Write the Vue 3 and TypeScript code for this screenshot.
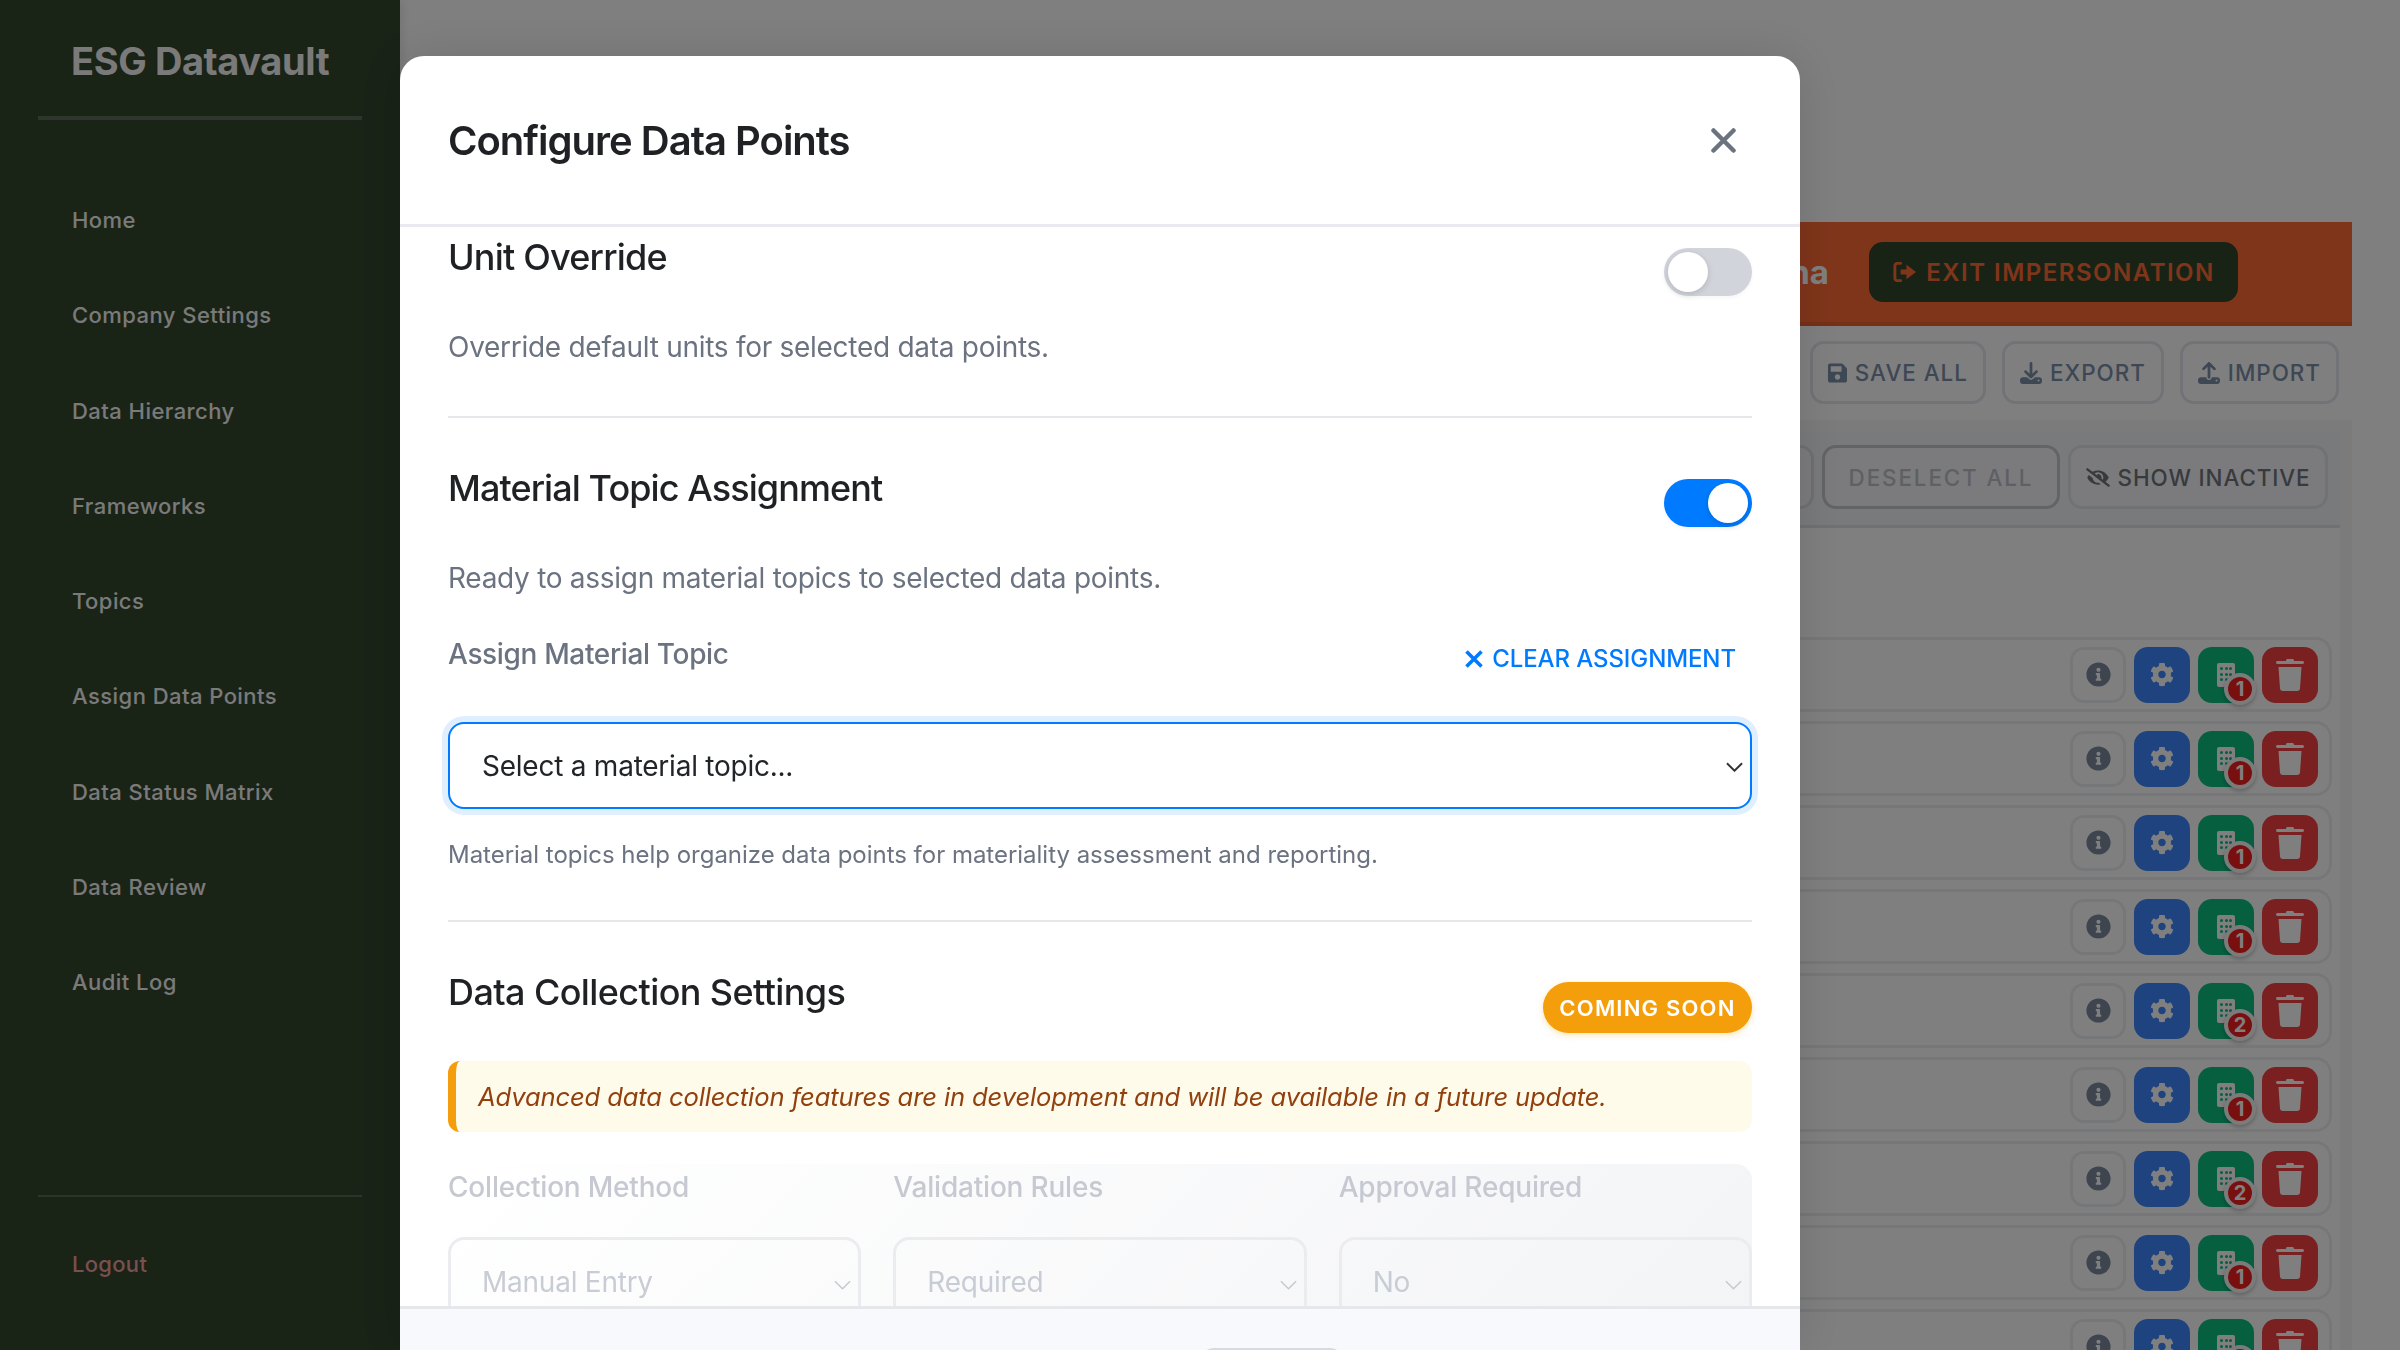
<script setup lang="ts">
const navItems: string[] = ['Home', 'Company Settings', 'Data Hierarchy', 'Frameworks', 'Topics', 'Assign Data Points', 'Data Status Matrix', 'Data Review', 'Audit Log']
const rows: number[] = [1, 1, 1, 1, 2, 1, 2, 1, 1]
const dots: number[] = [0, 1, 2, 3, 4, 5, 6, 7, 8]
</script>

<template>
  <div class="page">
    <aside class="sidebar">
      <div class="brand">ESG Datavault</div>
      <nav class="nav">
        <a v-for="item in navItems" :key="item" class="nav-item">{{ item }}</a>
      </nav>
      <div class="side-foot"><a class="logout">Logout</a></div>
    </aside>

    <main class="main">
      <div class="banner">
        <span class="banner-text">Impersonating Arizona</span>
        <button class="exit-btn">
          <svg class="ic-exit" viewBox="0 0 26 24"><path d="M9 3H5.500A2.500 2.500 0 0 0 3 5.500v13A2.500 2.500 0 0 0 5.500 21H9" fill="none" stroke="currentColor" stroke-width="3" stroke-linecap="round"/><path d="M9 9.500h6V4.500L25 12l-10 7.500v-5H9z" fill="currentColor"/></svg>
          EXIT IMPERSONATION
        </button>
      </div>
      <div class="actions">
        <button class="act-btn">
          <svg class="ic-save" viewBox="0 0 448 512"><path d="M433.941 129.941l-83.882-83.882A48 48 0 0 0 316.118 32H48C21.49 32 0 53.49 0 80v352c0 26.51 21.49 48 48 48h352c26.51 0 48-21.49 48-48V163.882a48 48 0 0 0-14.059-33.941zM224 416c-35.346 0-64-28.654-64-64 0-35.346 28.654-64 64-64s64 28.654 64 64c0 35.346-28.654 64-64 64zm96-304.52V212c0 6.627-5.373 12-12 12H76c-6.627 0-12-5.373-12-12V108c0-6.627 5.373-12 12-12h228.52c3.183 0 6.235 1.264 8.485 3.515l3.48 3.48A11.996 11.996 0 0 1 320 111.48z" fill="currentColor"/></svg>
          SAVE ALL
        </button>
        <button class="act-btn">
          <svg class="ic-act" viewBox="0 0 512 512"><path d="M288 32c0-17.700-14.300-32-32-32s-32 14.300-32 32V274.700l-73.400-73.400c-12.500-12.500-32.800-12.500-45.300 0s-12.500 32.800 0 45.300l128 128c12.500 12.500 32.800 12.500 45.300 0l128-128c12.500-12.500 12.500-32.800 0-45.300s-32.800-12.500-45.300 0L288 274.700V32zM64 352c-35.300 0-64 28.700-64 64v32c0 35.300 28.700 64 64 64H448c35.300 0 64-28.700 64-64V416c0-35.300-28.700-64-64-64H346.500l-45.300 45.300c-25 25-65.500 25-90.500 0L165.500 352H64zm368 56a24 24 0 1 1 0 48 24 24 0 1 1 0-48z" fill="currentColor"/></svg>
          EXPORT
        </button>
        <button class="act-btn">
          <svg class="ic-act" viewBox="0 0 512 512"><path d="M288 109.300V352c0 17.700-14.300 32-32 32s-32-14.300-32-32V109.300l-73.400 73.400c-12.500 12.500-32.800 12.500-45.300 0s-12.500-32.800 0-45.300l128-128c12.500-12.500 32.800-12.500 45.300 0l128 128c12.500 12.500 12.500 32.800 0 45.300s-32.800 12.500-45.300 0L288 109.300zM64 352H192c0 35.300 28.700 64 64 64s64-28.700 64-64H448c35.300 0 64 28.700 64 64v32c0 35.300-28.700 64-64 64H64c-35.300 0-64-28.700-64-64V416c0-35.300 28.700-64 64-64zM432 456a24 24 0 1 0 0-48 24 24 0 1 0 0 48z" fill="currentColor"/></svg>
          IMPORT
        </button>
      </div>
      <section class="panel">
        <div class="card">
          <div class="toolbar">
            <button class="tool-btn prev">SELECT ALL</button>
            <button class="tool-btn deselect">DESELECT ALL</button>
            <button class="tool-btn inactive">
              <svg class="ic-eye" viewBox="0 0 640 512"><path d="M320 400c-75.850 0-137.250-58.710-142.900-133.110L72.200 185.820c-13.790 17.300-26.480 35.590-36.720 55.590a32.350 32.350 0 0 0 0 29.190C89.710 376.410 197.070 448 320 448c26.910 0 52.870-4 77.890-10.460L346 397.390a144.130 144.130 0 0 1-26 2.610zm313.820 58.100l-110.550-85.440a331.250 331.250 0 0 0 81.250-102.070 32.350 32.350 0 0 0 0-29.190C550.290 135.590 442.930 64 320 64a308.150 308.150 0 0 0-147.320 37.700L45.460 3.370A16 16 0 0 0 23 6.180L3.370 31.450A16 16 0 0 0 6.180 53.900l588.360 454.730a16 16 0 0 0 22.460-2.810l19.640-25.270a16 16 0 0 0-2.820-22.450zm-183.720-142l-39.300-30.380A94.750 94.750 0 0 0 416 256a94.760 94.760 0 0 0-121.310-92.210A47.650 47.650 0 0 1 304 192a46.640 46.640 0 0 1-1.540 10l-73.610-56.890A142.310 142.310 0 0 1 320 112a143.920 143.920 0 0 1 144 144c0 21.630-5.290 41.790-13.900 60.110z" fill="currentColor"/></svg>
              SHOW INACTIVE
            </button>
          </div>
          <div class="rows">
            <div v-for="(count, i) in rows" :key="i" class="row">
              <button class="sq info">
                <svg class="ic-info" viewBox="0 0 512 512"><path d="M256 8C119.043 8 8 119.083 8 256c0 136.997 111.043 248 248 248s248-111.003 248-248C504 119.083 392.957 8 256 8zm0 110c23.196 0 42 18.804 42 42s-18.804 42-42 42-42-18.804-42-42 18.804-42 42-42zm56 254c0 6.627-5.373 12-12 12h-88c-6.627 0-12-5.373-12-12v-24c0-6.627 5.373-12 12-12h12v-64h-12c-6.627 0-12-5.373-12-12v-24c0-6.627 5.373-12 12-12h64c6.627 0 12 5.373 12 12v100h12c6.627 0 12 5.373 12 12v24z" fill="currentColor"/></svg>
              </button>
              <button class="sq gear">
                <svg class="ic-gear" viewBox="0 0 512 512"><path d="M487.400 315.700l-42.600-24.600c4.300-23.200 4.300-47 0-70.200l42.600-24.600c4.900-2.800 7.100-8.600 5.500-14-11.100-35.600-30-67.800-54.700-94.600-3.800-4.100-10-5.100-14.800-2.300L380.800 110c-17.900-15.400-38.500-27.300-60.800-35.100V25.800c0-5.600-3.900-10.500-9.400-11.700-36.700-8.200-74.300-7.800-109.200 0-5.500 1.200-9.400 6.100-9.400 11.700V75c-22.200 7.900-42.800 19.800-60.800 35.100L88.700 85.500c-4.900-2.800-11-1.900-14.800 2.300-24.700 26.700-43.600 58.900-54.700 94.600-1.700 5.400.6 11.200 5.500 14L67.300 221c-4.300 23.200-4.300 47 0 70.200l-42.600 24.600c-4.900 2.800-7.100 8.600-5.500 14 11.100 35.600 30 67.800 54.700 94.600 3.800 4.100 10 5.100 14.800 2.300l42.600-24.600c17.900 15.400 38.500 27.300 60.800 35.100v49.200c0 5.600 3.900 10.500 9.400 11.700 36.700 8.200 74.300 7.800 109.200 0 5.500-1.200 9.400-6.100 9.400-11.700v-49.200c22.200-7.900 42.800-19.800 60.800-35.100l42.600 24.600c4.900 2.800 11 1.900 14.800-2.300 24.700-26.700 43.600-58.900 54.700-94.600 1.500-5.500-.7-11.300-5.600-14.100zM256 336c-44.100 0-80-35.900-80-80s35.900-80 80-80 80 35.900 80 80-35.900 80-80 80z" fill="currentColor"/></svg>
              </button>
              <button class="sq build">
                <span class="building"><i v-for="d in dots" :key="d" class="dot"></i></span>
                <span class="badge">{{ count }}</span>
              </button>
              <button class="sq trash">
                <svg class="ic-trash" viewBox="0 0 28 32"><path d="M10 1.500C10 .7 10.700 0 11.500 0h5c.8 0 1.500.7 1.500 1.500V2h8.500c.8 0 1.500.7 1.500 1.500S27.300 5 26.500 5h-25C.7 5 0 4.300 0 3.500S.7 2 1.500 2H10zM2.500 8h23l-1.500 21.500c-.1 1.400-1.300 2.500-2.700 2.500H6.700c-1.400 0-2.600-1.100-2.700-2.500z" fill="currentColor"/></svg>
              </button>
            </div>
          </div>
        </div>
      </section>
    </main>

    <div class="overlay"></div>

    <div class="modal">
      <header class="modal-head">
        <h2 class="modal-title">Configure Data Points</h2>
        <button class="close-btn" aria-label="Close">
          <svg viewBox="0 0 25 25"><path d="M2.500 2.500l20 20M22.500 2.500l-20 20" stroke="currentColor" stroke-width="4.500" stroke-linecap="round" fill="none"/></svg>
        </button>
      </header>
      <div class="modal-body">
        <section class="sec">
          <div class="sec-head">
            <h3 class="sec-title">Unit Override</h3>
            <span class="toggle"><span class="knob"></span></span>
          </div>
          <p class="desc">Override default units for selected data points.</p>
        </section>

        <section class="sec second">
          <div class="sec-head">
            <h3 class="sec-title material">Material Topic Assignment</h3>
            <span class="toggle on"><span class="knob"></span></span>
          </div>
          <p class="desc">Ready to assign material topics to selected data points.</p>
          <div class="assign-row">
            <label class="assign-label">Assign Material Topic</label>
            <button class="clear-btn">
              <svg viewBox="0 0 18 18"><path d="M1.500 1.500l15 15M16.500 1.500l-15 15" stroke="currentColor" stroke-width="3.600" fill="none"/></svg>
              CLEAR ASSIGNMENT
            </button>
          </div>
          <div class="select focus">
            <span>Select a material topic...</span>
            <svg class="chev" viewBox="0 0 18 10"><path d="M1 1l8 8 8-8" fill="none" stroke="currentColor" stroke-width="2"/></svg>
          </div>
          <p class="help">Material topics help organize data points for materiality assessment and reporting.</p>
        </section>

        <section class="sec last">
          <div class="sec-head">
            <h3 class="sec-title collection">Data Collection Settings</h3>
            <span class="soon">COMING SOON</span>
          </div>
          <div class="notice">Advanced data collection features are in development and will be available in a future update.</div>
          <div class="grid">
            <div class="field">
              <label class="field-label">Collection Method</label>
              <div class="select dis"><span>Manual Entry</span><svg class="chev" viewBox="0 0 18 10"><path d="M1 1l8 8 8-8" fill="none" stroke="currentColor" stroke-width="1.600"/></svg></div>
            </div>
            <div class="field">
              <label class="field-label">Validation Rules</label>
              <div class="select dis"><span>Required</span><svg class="chev" viewBox="0 0 18 10"><path d="M1 1l8 8 8-8" fill="none" stroke="currentColor" stroke-width="1.600"/></svg></div>
            </div>
            <div class="field">
              <label class="field-label">Approval Required</label>
              <div class="select dis"><span>No</span><svg class="chev" viewBox="0 0 18 10"><path d="M1 1l8 8 8-8" fill="none" stroke="currentColor" stroke-width="1.600"/></svg></div>
            </div>
          </div>
        </section>
      </div>
      <footer class="modal-foot"><button class="foot-btn"></button></footer>
    </div>
  </div>
</template>

<style>
html, body { margin: 0; height: 100%; overflow: hidden; background: #fff; }
</style>

<style scoped>
* { box-sizing: border-box; }
.page { display: flex; width: 2400px; height: 1350px; overflow: hidden; font-family: Inter, "Liberation Sans", sans-serif; background: #fff; }
button { font-family: inherit; cursor: pointer; background: none; }
svg { flex-shrink: 0; }

/* sidebar (colours before the 50% overlay) */
.sidebar { position: relative; width: 400px; flex-shrink: 0; height: 1350px; background: #33462d; display: flex; flex-direction: column; padding: 0 38px; box-shadow: 2px 0 10px rgba(0,0,0,.1); }
.brand { height: 120px; border-bottom: 4px solid #5e6a5a; padding: 36px 0 0 33px; font-size: 38px; font-weight: 700; line-height: 50px; color: #f4f4f4; letter-spacing: -0.4px; }
.nav { display: flex; flex-direction: column; padding-top: 53px; flex: 1; }
.nav-item { height: 95.300px; line-height: 95.300px; padding-left: 34px; color: #f4f4f4; font-size: 22px; font-weight: 500; letter-spacing: 0.450px; }
.side-foot { height: 155px; border-top: 2px solid #5a6656; padding: 45px 0 0 34px; }
.logout { font-size: 22px; font-weight: 500; color: #f0a0a0; line-height: 44px; letter-spacing: 0.3px; }

/* background */
.main { flex: 1; min-width: 0; padding: 222px 48px 0 0; }
.banner { height: 104px; background: #ff6b35; border-bottom: 4px solid #ec6030; display: flex; align-items: center; justify-content: flex-end; padding-right: 114px; gap: 40px; }
.banner-text { color: #fff; font-weight: 700; font-size: 33px; white-space: nowrap; }
.exit-btn { height: 60px; width: 369px; border: 0; border-radius: 14px; background: #30472c; color: #ff6b35; font-weight: 600; font-size: 24px; letter-spacing: 1.500px; display: flex; align-items: center; justify-content: center; gap: 9px; white-space: nowrap; padding: 0; }
.ic-exit { width: 25px; height: 24px; }
.actions { display: flex; justify-content: flex-end; gap: 16px; padding: 15px 13px 16px 0; height: 94px; }
.act-btn { height: 63px; border: 3px solid #e2e6ec; border-radius: 14px; color: #7c8ea8; font-size: 22.400px; font-weight: 500; letter-spacing: 1px; padding: 0 15px; display: flex; align-items: center; gap: 8px; white-space: nowrap; background: #fff; }
.ic-save { width: 19px; height: 22px; }
.ic-act { width: 22px; height: 22px; }
.panel { background: #f7f7f7; padding: 12px 12px 0 0; height: 930px; }
.card { background: #fff; height: 100%; }
.toolbar { height: 96px; background: #f3f5f8; border-bottom: 3px solid #dfe2e7; display: flex; justify-content: flex-end; align-items: flex-start; gap: 8px; padding: 13px 12px 0 0; }
.tool-btn { height: 64px; border: 3px solid #dde0e6; border-radius: 14px; font-size: 22.400px; font-weight: 500; padding: 0 16px; display: flex; align-items: center; gap: 8px; white-space: nowrap; background: #f6f7fa; }
.prev { color: #666; width: 236px; justify-content: center; letter-spacing: 1px; }
.deselect { color: #bcc0c8; border-color: #c6c9cd; width: 238px; justify-content: center; letter-spacing: 1.900px; }
.inactive { color: #70747c; width: 260px; justify-content: center; border-color: #e2e5ea; letter-spacing: 0.900px; }
.ic-eye { width: 24px; height: 19px; }
.rows { display: flex; flex-direction: column; gap: 9px; padding: 109px 8px 0 0; }
.row { height: 75px; flex-shrink: 0; border: 3px solid #eceff3; border-radius: 16px; display: flex; justify-content: flex-end; align-items: center; gap: 8px; padding-right: 11px; background: #fff; }
.sq { position: relative; width: 56px; height: 56px; border-radius: 14px; border: 0; padding: 0; display: flex; align-items: center; justify-content: center; }
.info { border: 3px solid #eceff3; color: #7d8a9f; }
.ic-info { width: 25px; height: 25px; }
.gear { background: #3c86fd; color: #fff; }
.ic-gear { width: 24px; height: 25px; }
.build { background: #0cc080; color: #fff; }
.building { width: 18px; height: 24px; background: #fff; border-radius: 2px; display: grid; grid-template-columns: repeat(3, 3px); column-gap: 1.700px; row-gap: 2.700px; padding: 4.500px 3px 0; align-content: start; }
.dot { width: 3px; height: 3px; background: #0cc080; border-radius: 50%; }
.badge { position: absolute; right: -2px; bottom: -2px; width: 32px; height: 32px; border-radius: 50%; background: #f02020; border: 4px solid #f7f7f7; color: #fff; font-size: 20px; font-weight: 700; line-height: 24px; text-align: center; box-shadow: 0 2px 4px rgba(0,0,0,.25); }
.trash { background: #f44040; color: #fff; }
.ic-trash { width: 28px; height: 32px; }

.overlay { position: fixed; inset: 0; background: rgba(0,0,0,.5); }

/* modal */
.modal { position: fixed; left: 400px; top: 56px; width: 1400px; height: 1294px; background: #fff; border-radius: 24px 24px 0 0; display: flex; flex-direction: column; overflow: hidden; box-shadow: 0 0 50px rgba(0,0,0,.12); }
.modal-head { height: 171px; flex-shrink: 0; border-bottom: 3px solid #e9e9ef; display: flex; align-items: center; justify-content: space-between; padding: 0 64px 0 48px; }
.modal-title { margin: 0; font-size: 40px; font-weight: 600; color: #1f2125; letter-spacing: -1px; }
.close-btn { width: 25px; height: 25px; padding: 0; border: 0; color: #6b7280; display: block; }
.close-btn svg { display: block; width: 25px; height: 25px; }
.modal-body { flex: 1; min-height: 0; overflow: hidden; padding: 8px 48px 0; }
.sec { padding-bottom: 48px; margin-bottom: 48px; border-bottom: 2px solid #e5e7eb; }
.sec.second { padding-bottom: 46px; }
.sec.last { border-bottom: 0; padding: 0; margin: 0; }
.sec-head { display: flex; justify-content: space-between; align-items: flex-start; }
.sec-title { margin: 0; font-size: 36px; line-height: 44px; font-weight: 500; color: #1f2125; letter-spacing: -0.800px; }
.sec-title.material { letter-spacing: -0.920px; }
.sec-title.collection { letter-spacing: -0.600px; }
.toggle { width: 88px; height: 48px; margin-top: 13px; border-radius: 24px; background: #d1d5db; padding: 4px; display: flex; box-shadow: 0 2px 4px rgba(0,0,0,.04); }
.toggle.on { background: #007bff; justify-content: flex-end; }
.knob { width: 40px; height: 40px; border-radius: 50%; background: #fff; box-shadow: 0 2px 6px rgba(0,0,0,.15); }
.desc { margin: 30px 0 0; font-size: 28px; line-height: 42px; color: #6b7280; letter-spacing: -0.280px; }
.assign-row { display: flex; justify-content: space-between; align-items: flex-start; margin-top: 35px; height: 45px; }
.assign-label { font-size: 28px; line-height: 40px; font-weight: 500; color: #6b7280; letter-spacing: -0.350px; }
.clear-btn { border: 0; padding: 0; margin: 5px 16px 0 0; color: #007bff; font-size: 24px; font-weight: 500; line-height: 40px; letter-spacing: -0.100px; display: flex; align-items: center; gap: 9px; white-space: nowrap; }
.clear-btn svg { width: 18px; height: 18px; }
.select { position: relative; height: 87px; border-radius: 16px; padding-left: 32px; display: flex; align-items: center; font-size: 28px; letter-spacing: -0.240px; background: #fff; }
.select.focus { margin-top: 43px; border: 2px solid #007bff; box-shadow: 0 0 0 6px rgba(0,123,255,.12); color: #212529; }
.chev { position: absolute; right: 7px; top: 38px; width: 17px; height: 10px; color: #333; }
.help { margin: 27px 0 0; font-size: 24px; line-height: 38px; color: #6b7280; letter-spacing: -0.020px; }
.soon { margin-top: 12px; height: 51px; width: 209px; border-radius: 26px; background: #f59e0b; color: #fff; font-size: 22px; font-weight: 600; letter-spacing: 1.200px; display: flex; align-items: center; justify-content: center; box-shadow: 0 2px 6px rgba(245,158,11,.3); }
.notice { margin-top: 28px; height: 71px; border-left: 8px solid #f59e0b; border-radius: 12px; background: #fffbeb; color: #92400e; font-style: italic; font-size: 25.600px; letter-spacing: -0.140px; display: flex; align-items: center; padding-left: 22px; }
.grid { margin-top: 32px; padding-top: 3px; display: grid; grid-template-columns: repeat(3, 1fr); gap: 32px; border-radius: 16px; background: linear-gradient(135deg, #fff, #f3f4f6); }
.field-label { display: block; font-size: 28px; line-height: 40px; font-weight: 500; color: #c6c9d1; letter-spacing: -0.200px; }
.select.dis { margin-top: 30px; height: 90px; padding-left: 31px; border: 3px solid #ebecf0; color: #c8ccd4; background: transparent; }
.select.dis .chev { color: #c5c9d1; top: 40px; }

.modal-foot { height: 44px; flex-shrink: 0; border-top: 3px solid #e5e7eb; background: #f8f9fc; padding: 39px 456px 0 0; display: flex; justify-content: flex-end; }
.foot-btn { width: 144px; height: 40px; border: 3px solid #d8dae0; border-radius: 14px; padding: 0; }
</style>
